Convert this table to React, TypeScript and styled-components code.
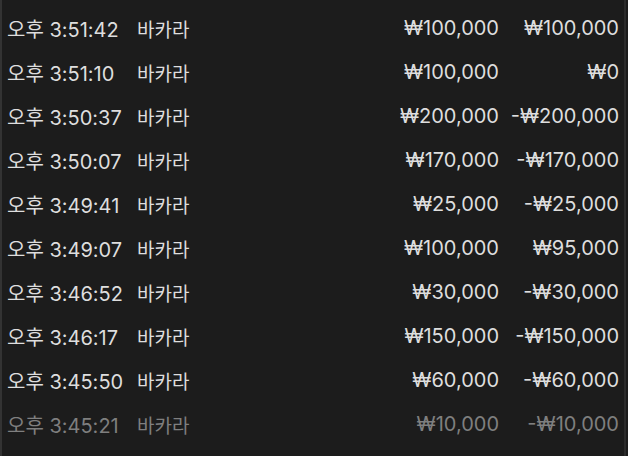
import React from 'react';
import styled, { createGlobalStyle } from 'styled-components';

const GlobalStyle = createGlobalStyle`
	html, body {
		margin: 0;
		padding: 0;
		background: #1c1c1c;
	}
	body {
		font-family: Inter, 'Noto Sans CJK KR', sans-serif;
	}
`;

const Panel = styled.div`
	width: 626px;
	height: 456px;
	box-sizing: border-box;
	border-left: 2px solid #333333;
	border-right: 2px solid #2c2c2c;
	background: #1c1c1c;
	padding: 6px 5px 0 5px;
	overflow: hidden;
`;

const Row = styled.div<{ $dim?: boolean }>`
	display: grid;
	grid-template-columns: 130px 1fr 120px 120px;
	align-items: center;
	height: 44px;
	font-size: 20px;
	font-weight: 400;
	color: ${(p) => (p.$dim ? '#7f7f7f' : '#dedede')};
	white-space: nowrap;
`;

const Cell = styled.span<{ $right?: boolean }>`
	text-align: ${(p) => (p.$right ? 'right' : 'left')};
`;

const Game = styled.span`
	font-size: 19px;
`;

type HistoryItem = {
	time: string;
	game: string;
	bet: string;
	result: string;
};

const history: HistoryItem[] = [
	{ time: '오후 3:51:42', game: '바카라', bet: '₩100,000', result: '₩100,000' },
	{ time: '오후 3:51:10', game: '바카라', bet: '₩100,000', result: '₩0' },
	{ time: '오후 3:50:37', game: '바카라', bet: '₩200,000', result: '-₩200,000' },
	{ time: '오후 3:50:07', game: '바카라', bet: '₩170,000', result: '-₩170,000' },
	{ time: '오후 3:49:41', game: '바카라', bet: '₩25,000', result: '-₩25,000' },
	{ time: '오후 3:49:07', game: '바카라', bet: '₩100,000', result: '₩95,000' },
	{ time: '오후 3:46:52', game: '바카라', bet: '₩30,000', result: '-₩30,000' },
	{ time: '오후 3:46:17', game: '바카라', bet: '₩150,000', result: '-₩150,000' },
	{ time: '오후 3:45:50', game: '바카라', bet: '₩60,000', result: '-₩60,000' },
	{ time: '오후 3:45:21', game: '바카라', bet: '₩10,000', result: '-₩10,000' },
];

function App() {
	return (
		<>
			<GlobalStyle />
			<Panel>
				{history.map((item, i) => (
					<Row key={item.time} $dim={i === history.length - 1}>
						<Cell>{item.time}</Cell>
						<Game>{item.game}</Game>
						<Cell $right>{item.bet}</Cell>
						<Cell $right>{item.result}</Cell>
					</Row>
				))}
			</Panel>
		</>
	);
}

export default App;
